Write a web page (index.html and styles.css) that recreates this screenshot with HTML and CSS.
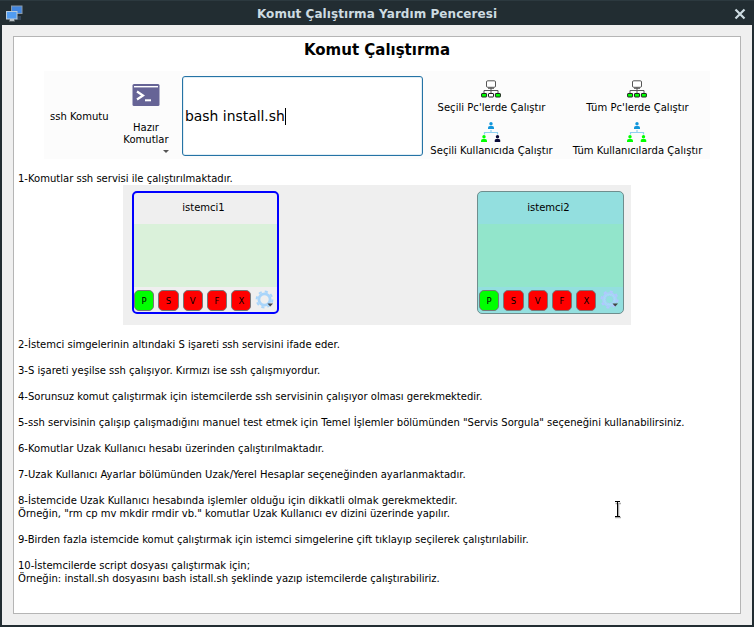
FILE: index.html
```html
<!DOCTYPE html>
<html lang="tr">
<head>
<meta charset="utf-8">
<title>Komut Çalıştırma Yardım Penceresi</title>
<link rel="stylesheet" href="styles.css">
</head>
<body>
<svg width="0" height="0" class="defs">
  <defs>
    <symbol id="pcs" viewBox="0 0 20 18">
      <g fill="none" stroke="#555" stroke-width="1">
        <path d="M10 7.500V13M3 13V10.500H17V13"/>
        <rect x="5.500" y=".8" width="9" height="6.500" rx="1.200" fill="#fff"/>
      </g>
      <path d="M7 8.300H13" stroke="#555"/>
      <g stroke="#222" stroke-width="1">
        <rect class="side" x=".6" y="13.500" width="5" height="3.500" rx=".5"/>
        <rect class="mid" x="7.500" y="13.500" width="5" height="3.500" rx=".5"/>
        <rect class="side" x="14.400" y="13.500" width="5" height="3.500" rx=".5"/>
      </g>
    </symbol>
    <symbol id="person" viewBox="0 0 6 7"><circle cx="3" cy="1.700" r="1.700"/><path d="M0 7V5.500Q0 4 1.800 4H4.200Q6 4 6 5.500V7Z"/></symbol>
    <symbol id="users" viewBox="0 0 20 21">
      <path d="M10 8V10.500M3.500 12.500V10.500H16.500V12.500" fill="none" stroke="#8fd0f0" stroke-width="1.200"/>
      <use href="#person" x="7" y="0" width="6" height="7" fill="#1296db"/>
      <use href="#person" x="0" y="13" width="6" height="7" fill="#00ff00"/>
      <use href="#person" x="13.500" y="13" width="6" height="7" class="last"/>
    </symbol>
    <symbol id="gear" viewBox="0 0 20 20">
      <circle cx="9.500" cy="9.500" r="7.900" fill="none" stroke-width="2" stroke-dasharray="3.100 3.105"/>
      <circle cx="9.500" cy="9.500" r="5.600" fill="none" stroke-width="2.800"/>
      <path d="M12.500 13.500H18L15.200 16.500Z" fill="#444" stroke="none"/>
    </symbol>
    <symbol id="gear-outline" viewBox="0 0 20 20">
      <g fill="none" stroke="#b0c8ff">
        <circle cx="9.500" cy="9.500" r="8" stroke-width="2.200" stroke-dasharray="3 3.283"/>
        <circle cx="9.500" cy="9.500" r="6.600" stroke-width="1.400"/>
        <circle cx="9.500" cy="9.500" r="4.200" stroke-width="1"/>
      </g>
      <circle cx="9.500" cy="9.500" r="5.300" fill="none" stroke="#a5dcf5" stroke-width="1.600"/>
      <path d="M12.500 13.500H18L15.200 16.500Z" fill="#444" stroke="none"/>
    </symbol>
  </defs>
</svg>
<div class="window">
  <header class="titlebar">
    <svg class="app-icon" width="18" height="18" viewBox="0 0 18 18">
      <path d="M12 11H15V15H10" fill="#34465a"/>
      <rect x="5.500" y="1" width="10.500" height="7.500" fill="#4286e0" stroke="#8999a8"/>
      <rect x=".5" y="6.500" width="10.500" height="7.500" fill="#519cf1" stroke="#b8cbdc"/>
      <path d="M4 14.500H8V15.500H4ZM3 16H9" fill="#d6dde2" stroke="#d6dde2" stroke-width=".5"/>
    </svg>
    <span class="title">Komut Çalıştırma Yardım Penceresi</span>
    <svg class="close" width="12" height="12" viewBox="0 0 12 12"><path d="M1.500 1.500L10.500 10.500M10.500 1.500L1.500 10.500" stroke="#cddbe1" stroke-width="2.200"/></svg>
  </header>
  <main class="page">
    <h1><span>Komut Çalıştırma</span></h1>
    <section class="toolbar">
      <span class="label">ssh Komutu</span>
      <div class="preset">
        <svg width="28" height="22" viewBox="0 0 28 22">
          <rect x=".5" y="0" width="27" height="22" rx="1.500" fill="#666496"/>
          <path d="M2 2.700H26" stroke="#fff" stroke-width="1.400"/>
          <path d="M5 7.500L11 11.500L5 15.500" fill="none" stroke="#fff" stroke-width="2.200"/>
          <path d="M13 16.300H19" stroke="#fff" stroke-width="2"/>
        </svg>
        <span>Hazır<br>Komutlar</span>
        <i class="arrow"></i>
      </div>
      <div class="input"><span>bash install.sh</span><i class="caret"></i></div>
      <div class="actions first">
        <div class="action"><svg class="pc some" width="20" height="18"><use href="#pcs"/></svg><span>Seçili Pc'lerde Çalıştır</span></div>
        <div class="action"><svg class="usr some" width="20" height="21"><use href="#users"/></svg><span>Seçili Kullanıcıda Çalıştır</span></div>
      </div>
      <div class="actions">
        <div class="action"><svg class="pc all" width="20" height="18"><use href="#pcs"/></svg><span>Tüm Pc'lerde Çalıştır</span></div>
        <div class="action"><svg class="usr all" width="20" height="21"><use href="#users"/></svg><span>Tüm Kullanıcılarda Çalıştır</span></div>
      </div>
    </section>
    <p class="intro">1-Komutlar ssh servisi ile çalıştırılmaktadır.</p>
    <section class="clients">
      <div class="client selected">
        <div class="name">istemci1</div>
        <div class="screen"></div>
        <div class="buttons"><b class="on">P</b><b>S</b><b>V</b><b>F</b><b>X</b><svg class="gear" width="20" height="20"><use href="#gear"/></svg></div>
      </div>
      <div class="client other">
        <div class="name">istemci2</div>
        <div class="screen"></div>
        <div class="buttons"><b class="on">P</b><b>S</b><b>V</b><b>F</b><b>X</b><svg class="gear" width="20" height="20"><use href="#gear-outline"/></svg></div>
      </div>
    </section>
    <section class="notes">
      <p>2-İstemci simgelerinin altındaki S işareti ssh servisini ifade eder.</p>
      <p>3-S işareti yeşilse ssh çalışıyor. Kırmızı ise ssh çalışmıyordur.</p>
      <p>4-Sorunsuz komut çalıştırmak için istemcilerde ssh servisinin çalışıyor olması gerekmektedir.</p>
      <p>5-ssh servisinin çalışıp çalışmadığını manuel test etmek için Temel İşlemler bölümünden "Servis Sorgula" seçeneğini kullanabilirsiniz.</p>
      <p>6-Komutlar Uzak Kullanıcı hesabı üzerinden çalıştırılmaktadır.</p>
      <p>7-Uzak Kullanıcı Ayarlar bölümünden Uzak/Yerel Hesaplar seçeneğinden ayarlanmaktadır.</p>
      <p>8-İstemcide Uzak Kullanıcı hesabında işlemler olduğu için dikkatli olmak gerekmektedir.<br>Örneğin, "rm cp mv mkdir rmdir vb." komutlar Uzak Kullanıcı ev dizini üzerinde yapılır.</p>
      <p>9-Birden fazla istemcide komut çalıştırmak için istemci simgelerine çift tıklayıp seçilerek çalıştırılabilir.</p>
      <p>10-İstemcilerde script dosyası çalıştırmak için;<br>Örneğin: install.sh dosyasını bash istall.sh şeklinde yazıp istemcilerde çalıştırabiliriz.</p>
    </section>
  </main>
</div>
<svg class="cursor" width="9" height="19" viewBox="0 0 9 19"><path d="M2.500 3.500H8M5.500 3V16M2 17.500H8" fill="none" stroke="#aaa" stroke-width="1.500"/><path d="M2 1.500H7M4.500 1.500V16.500M2 16.500H7" fill="none" stroke="#000"/></svg>
</body>
</html>
```
FILE: styles.css
```css
* { box-sizing: border-box; }
body { margin: 0; font: 10.03px/13px "DejaVu Sans", sans-serif; color: #000; }
.defs { position: absolute; }
.window { width: 754px; height: 627px; border: 2px solid #222d32; border-top: 0; background: #efefef; display: flex; flex-direction: column; }
.titlebar { height: 25px; flex: none; background: #222d32; border-top: 1px solid #2c393f; display: flex; align-items: center; margin: 0 -2px; padding: 1px 8px 0 6px; color: #cddbe1; }
.title { flex: 1; text-align: center; font-weight: bold; font-size: 12px; letter-spacing: .06px; padding: 1px 4px 0 0; }
.page { margin: 11px 11px 11px 11px; flex: 1; background: #fff; border: 1px solid #b5b5b5; padding: 3px 4px 0; }
h1 { margin: 0; font-size: 15px; line-height: 20px; text-align: center; }
.toolbar { width: 666px; height: 88px; margin: 11px 0 0 26px; background: #fcfcfc; display: flex; }
.label { margin: 39px 0 0 6px; width: 64px; flex: none; white-space: nowrap; }
.preset { width: 64px; flex: none; padding-top: 13px; display: flex; flex-direction: column; align-items: center; text-align: center; line-height: 12px; position: relative; }
.preset svg { margin-bottom: 16px; }
.arrow { position: absolute; right: 9px; bottom: 6px; border: 3px solid transparent; border-top-color: #555; border-bottom: 0; }
.input { margin: 5px 0 0 4px; width: 241px; flex: none; height: 80px; border: 1px solid #2573a5; border-radius: 3px; background: #fff; display: flex; align-items: center; padding-left: 2px; font-size: 13.900px; line-height: 18px; box-shadow: inset 0 0 0 1px #e1eef5; }
.caret { width: 1px; height: 17px; background: #000; }
.actions { width: 146px; flex: none; padding-top: 8px; }
.first { margin-left: -5px; }
.action { height: 43px; display: flex; flex-direction: column; align-items: center; white-space: nowrap; }
.action span { letter-spacing: .03px; padding-left: 1px; }
.pc { margin: 1px 0 3px; }
.usr { margin-bottom: 1px; }
.pc { --side: #0f0; --mid: #fff; }
.pc.all { --mid: #0f0; }
.usr.some { --last: #0b0b38; }
.usr.all { --last: #0f0; }
.side { fill: var(--side); }
.mid { fill: var(--mid); }
.last { fill: var(--last); }
p { margin: 0 0 13px; white-space: nowrap; }
.intro { margin: 13px 0 0; }
.clients { width: 508px; height: 140px; margin: 0 0 13px 105px; background: #efefef; display: flex; justify-content: space-between; padding: 6px 7px 0 9px; }
.client { width: 147px; height: 123px; border-radius: 5px; display: flex; flex-direction: column; }
.selected { border: 2px solid #00f; --screen: #daf1da; --gear: #a9d5fa; }
.other { border: 1px solid #6f8e8e; background: #93dfdf; padding: 1px; --screen: #92e5cb; }
.name { height: 31px; padding: 8px 4px 0 0; text-align: center; }
.screen { height: 63px; flex: none; background: var(--screen); }
.other .screen { margin: 0 -1px; }
.buttons { display: flex; gap: 4px; padding-top: 3px; }
.buttons b { width: 20.300px; flex: none; height: 21px; border: 1px solid #777; border-radius: 5px; background: #f00; font-weight: normal; font-size: 8.500px; line-height: 20px; text-align: center; }
.buttons .on { background: #0f0; }
.gear { stroke: var(--gear); flex: none; }
.cursor { position: absolute; left: 613px; top: 500px; }
```
